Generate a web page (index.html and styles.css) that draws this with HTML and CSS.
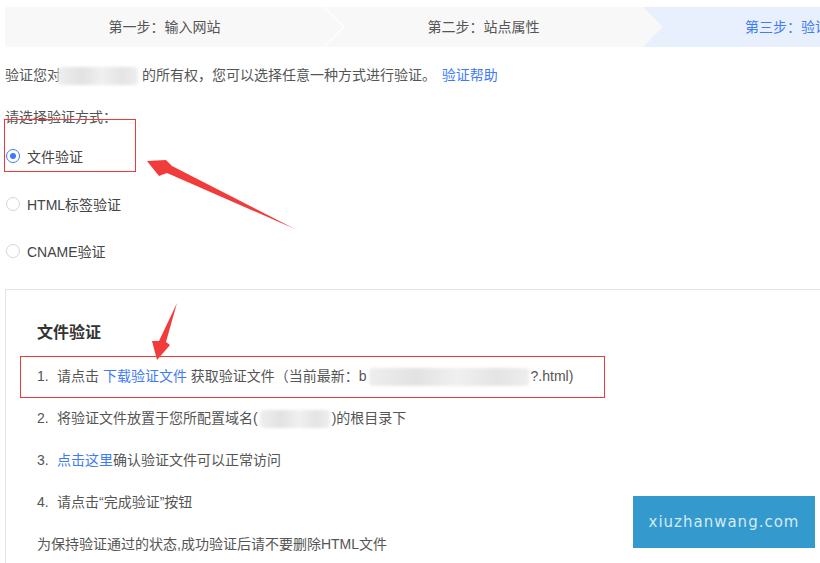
FILE: index.html
```html
<!DOCTYPE html>
<html lang="zh-CN">
<head>
    <meta charset="UTF-8">
    <meta name="viewport" content="width=device-width, initial-scale=1.0">
    <title>站点验证</title>
    <link rel="stylesheet" href="styles.css">
</head>
<body>
    <div class="page">
        <div class="steps">
            <div class="step done first">第一步：输入网站</div>
            <div class="step done">第二步：站点属性</div>
            <div class="step active">第三步：验证站点</div>
        </div>

        <p class="intro">验证您对<span class="blur intro-blur"></span> 的所有权，您可以选择任意一种方式进行验证。 <a href="#">验证帮助</a></p>

        <p class="choose">请选择验证方式：</p>
        <div class="methods">
            <label class="method"><span class="radio checked"></span>文件验证</label>
            <label class="method"><span class="radio"></span>HTML标签验证</label>
            <label class="method"><span class="radio"></span>CNAME验证</label>
        </div>

        <div class="panel">
            <h3>文件验证</h3>
            <ol class="howto">
                <li><span class="num">1.</span>请点击 <a href="#">下载验证文件</a> 获取验证文件（当前最新：b<span class="blur file-blur"></span>?.html)</li>
                <li><span class="num">2.</span>将验证文件放置于您所配置域名(<span class="blur domain-blur"></span>)的根目录下</li>
                <li><span class="num">3.</span><a href="#">点击这里</a>确认验证文件可以正常访问</li>
                <li><span class="num">4.</span>请点击“完成验证”按钮</li>
                <li>为保持验证通过的状态,成功验证后请不要删除HTML文件</li>
            </ol>
        </div>

        <!-- annotations -->
        <div class="mark mark-method"></div>
        <div class="mark mark-download"></div>
        <svg class="arrows" width="820" height="563" viewBox="0 0 820 563">
            <polygon points="147,161 166,160 172,166 295,229 167,173 159,176" fill="#f23b3b"/>
            <polygon points="177,303 166,342 170,345 157,360 152,341 159,341" fill="#f23b3b"/>
        </svg>
        <div class="watermark">xiuzhanwang.com</div>
    </div>
</body>
</html>
```

FILE: styles.css
```css
html, body {
    margin: 0;
    padding: 0;
    overflow: hidden;
    background-color: #fff;
}
body {
    font-family: "Liberation Sans", "Noto Sans CJK SC", sans-serif;
    font-size: 14px;
    color: #555;
}
a {
    color: #3e7bf7;
    text-decoration: none;
}
.page {
    position: relative;
    width: 820px;
    height: 563px;
    padding: 7px 0 0 5px;
    box-sizing: border-box;
    overflow: hidden;
}
.steps {
    display: flex;
    height: 40px;
    background-color: #f8f8f8;
    overflow: hidden;
}
.step {
    flex: none;
    width: 319px;
    position: relative;
    line-height: 40px;
    text-align: center;
    color: #555;
}
.step.first::after {
    content: "";
    position: absolute;
    top: 0;
    right: -21px;
    width: 22px;
    height: 40px;
    z-index: 1;
    background-color: #fff;
    clip-path: polygon(0 0, 2px 0, 22px 50%, 2px 100%, 0 100%, 20px 50%);
}
.step.active {
    width: 340px;
    box-sizing: border-box;
    text-align: left;
    padding-left: 102px;
    color: #3e7bf7;
    background-color: #e9f0fd;
    clip-path: polygon(0 0, 100% 0, 100% 100%, 0 100%, 20px 50%);
}
.intro {
    margin: 18px 0 0;
    line-height: 20px;
}
.intro a {
    margin-left: 2px;
}
.blur {
    display: inline-block;
    height: 18px;
    vertical-align: middle;
    background: linear-gradient(90deg, #eee, #e2e2e2 30%, #f0f0f0 55%, #e4e4e4 80%, #eee);
    filter: blur(1.5px);
    border-radius: 4px;
}
.intro-blur {
    width: 80px;
    margin-left: -3px;
}
.file-blur {
    width: 160px;
    margin: 0 2px;
}
.domain-blur {
    width: 70px;
    margin: 0 2px;
}
.choose {
    margin: 22px 0 0;
    line-height: 20px;
}
.methods {
    margin-top: 5px;
}
.method {
    display: flex;
    align-items: center;
    height: 47.5px;
    color: #444;
}
.radio {
    width: 12px;
    height: 12px;
    margin: 0 7px 0 1px;
    border: 1px solid #d6d6d6;
    border-radius: 50%;
    position: relative;
    box-sizing: content-box;
}
.radio.checked {
    border-color: #3e7bf7;
}
.radio.checked::after {
    content: "";
    position: absolute;
    top: 3px;
    left: 3px;
    width: 6px;
    height: 6px;
    border-radius: 50%;
    background-color: #3e7bf7;
}
.panel {
    margin-top: 14px;
    border-top: 1px solid #e3e3e3;
    border-left: 1px solid #e3e3e3;
    padding: 31px 0 0 31px;
}
.panel h3 {
    margin: 0;
    font-size: 16px;
    line-height: 24px;
    color: #333;
}
.howto {
    list-style: none;
    margin: 10px 0 0;
    padding: 0;
}
.howto li {
    line-height: 42px;
    white-space: nowrap;
}
.num {
    display: inline-block;
    width: 20px;
}
.mark {
    position: absolute;
    border: 1px solid #ee3a3a;
}
.mark-method {
    left: 4px;
    top: 119px;
    width: 130px;
    height: 51px;
}
.mark-download {
    left: 20px;
    top: 356px;
    width: 583px;
    height: 40px;
}
.arrows {
    position: absolute;
    left: 0;
    top: 0;
    pointer-events: none;
}
.watermark {
    position: absolute;
    left: 633px;
    top: 496px;
    width: 182px;
    height: 52px;
    line-height: 52px;
    text-align: center;
    background-color: #3499cc;
    color: #d3eaf6;
    font-family: "DejaVu Sans", sans-serif;
    font-size: 15px;
    letter-spacing: 1px;
}
```
